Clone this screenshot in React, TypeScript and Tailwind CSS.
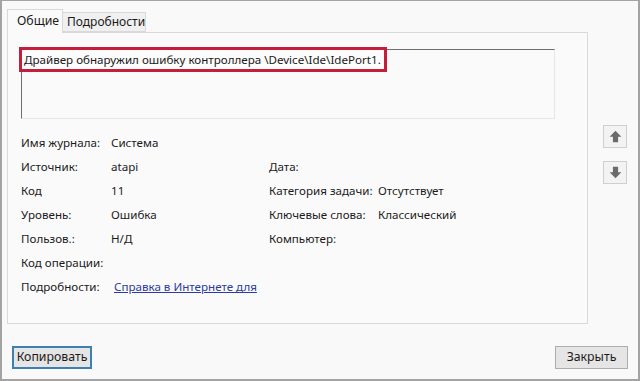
import React from "react";

const font = { fontFamily: '"Noto Sans", "Open Sans", sans-serif' };

function ArrowButton({ down }: { down?: boolean }) {
  return (
    <div className="flex h-[23px] w-[24px] items-center justify-center border border-[#cfcfcf] bg-[#f3f3f3]">
      <svg width="13" height="13" viewBox="0 0 12 12" className={down ? "rotate-180" : ""}>
        <path d="M6 0.8 L11.4 6.2 H8.4 V11.2 H3.6 V6.2 H0.6 Z" fill="#6b6b6b" />
      </svg>
    </div>
  );
}

const rows: [string, string, string?, string?][] = [
  ["Имя журнала:", "Система"],
  ["Источник:", "atapi", "Дата:", ""],
  ["Код", "11", "Категория задачи:", "Отсутствует"],
  ["Уровень:", "Ошибка", "Ключевые слова:", "Классический"],
  ["Пользов.:", "Н/Д", "Компьютер:", ""],
  ["Код операции:", ""],
];

export default function App() {
  return (
    <div
      style={font}
      className="flex h-[381px] w-[640px] flex-col border-x-2 border-b-2 border-t border-[#a3a3a3] bg-[#f9f9fa] text-[11.6px] text-[#1a1a1a]"
    >
      <div className="flex pl-[5px] pr-[4px]">
        <div className="flex flex-1 flex-col">
          {/* tabs */}
          <div className="mt-[8px] flex h-[23px] items-end">
            <div className="relative z-10 -mb-px flex h-[24px] w-[56px] items-center border border-b-0 border-[#d9d9d9] bg-[#fafafa] pl-[9px] text-[12.3px]">
              Общие
            </div>
            <div className="flex h-[20px] w-[83px] items-center border border-l-0 border-[#d9d9d9] bg-[#f0f0f0] pl-[4px] text-[12px]">
              Подробности
            </div>
          </div>
          {/* panel */}
          <div className="h-[292px] w-[581px] border border-[#d9d9d9] bg-[#fafafa] pl-[13px] pt-[16px]">
            <div className="h-[70px] w-[534px] border-l border-t border-[#6e6e6e] border-r-[#e6e6e6] border-b-[#e6e6e6] border-r border-b">
              <div className="-ml-[3px] -mt-[3px] inline-flex h-[25px] items-center border-[3px] border-[#c41e3a] bg-[#fcfcfc] pl-[2px] pr-[3px]">
                Драйвер обнаружил ошибку контроллера \Device\Ide\IdePort1.
              </div>
            </div>
            <div className="mt-[12px] flex flex-col">
              {rows.map(([a, b, c, d]) => (
                <div key={a} className="flex h-[24px] items-center">
                  <span className="w-[90px]">{a}</span>
                  <span className="w-[158px]">{b}</span>
                  {c !== undefined && <span className="w-[109px]">{c}</span>}
                  {d && <span>{d}</span>}
                </div>
              ))}
              <div className="flex h-[24px] items-center">
                <span className="w-[93px]">Подробности:</span>
                <span className="text-[#2b3c9e] underline">Справка в Интернете для </span>
              </div>
            </div>
          </div>
        </div>
        <div className="flex w-[46px] flex-col items-end gap-[13px] pr-[7px] pt-[124px]">
          <ArrowButton />
          <ArrowButton down />
        </div>
      </div>
      <div className="mt-auto mb-[10px] flex items-center justify-between px-[10px]">
        <button className="h-[23px] w-[80px] border-2 border-[#3c7fb1] bg-[#e5e5e5] text-[12.3px]">
          Копировать
        </button>
        <button className="h-[23px] w-[73px] border border-[#adadad] bg-[#e5e5e5] text-[12.3px]">
          Закрыть
        </button>
      </div>
    </div>
  );
}
